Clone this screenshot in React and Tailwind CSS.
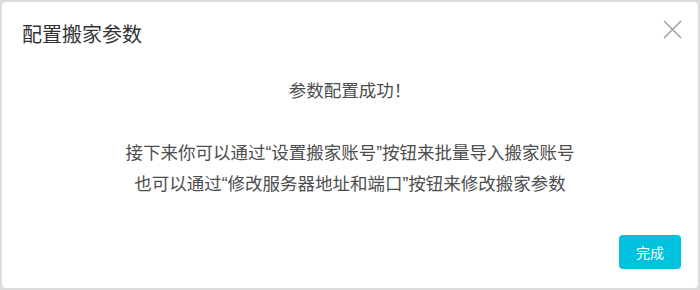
import React from 'react';

const quote = 'font-["Liberation_Sans"]';

export default function App() {
  return (
    <div
      className="w-[700px] h-[290px] bg-[#dcdcdc] p-[2px]"
      style={{ fontFamily: '"Noto Sans CJK SC", "Noto Sans", sans-serif' }}
    >
      <div className="h-full bg-white rounded-[4px] flex flex-col">
        <div className="flex items-start justify-between pl-[20px] pr-[16px] pt-[18px] h-[46px]">
          <h3 className="text-[20px] leading-[28px] text-[#333]">配置搬家参数</h3>
          <button className="w-[20px] h-[20px] -mt-[1px] flex items-center justify-center text-[#999]">
            <svg width="19" height="19" viewBox="0 0 19 19" fill="none" stroke="currentColor" strokeWidth="1.4">
              <path d="M1 1 L18 18 M18 1 L1 18" />
            </svg>
          </button>
        </div>

        <div className="flex-1 text-center text-[#4d4d4d] text-[17.5px]">
          <p className="mt-[30px] leading-[24px]">参数配置成功！</p>
          <div className="mt-[35px] leading-[30px]">
            <p>
              接下来你可以通过<span className={quote}>“</span>设置搬家账号<span className={quote}>”</span>按钮来批量导入搬家账号
            </p>
            <p>
              也可以通过<span className={quote}>“</span>修改服务器地址和端口<span className={quote}>”</span>按钮来修改搬家参数
            </p>
          </div>
        </div>

        <div className="flex justify-end pr-[17px] pb-[19px]">
          <button className="w-[62px] h-[34px] rounded-[4px] bg-[#00c1de] text-white text-[14px]">完成</button>
        </div>
      </div>
    </div>
  );
}
